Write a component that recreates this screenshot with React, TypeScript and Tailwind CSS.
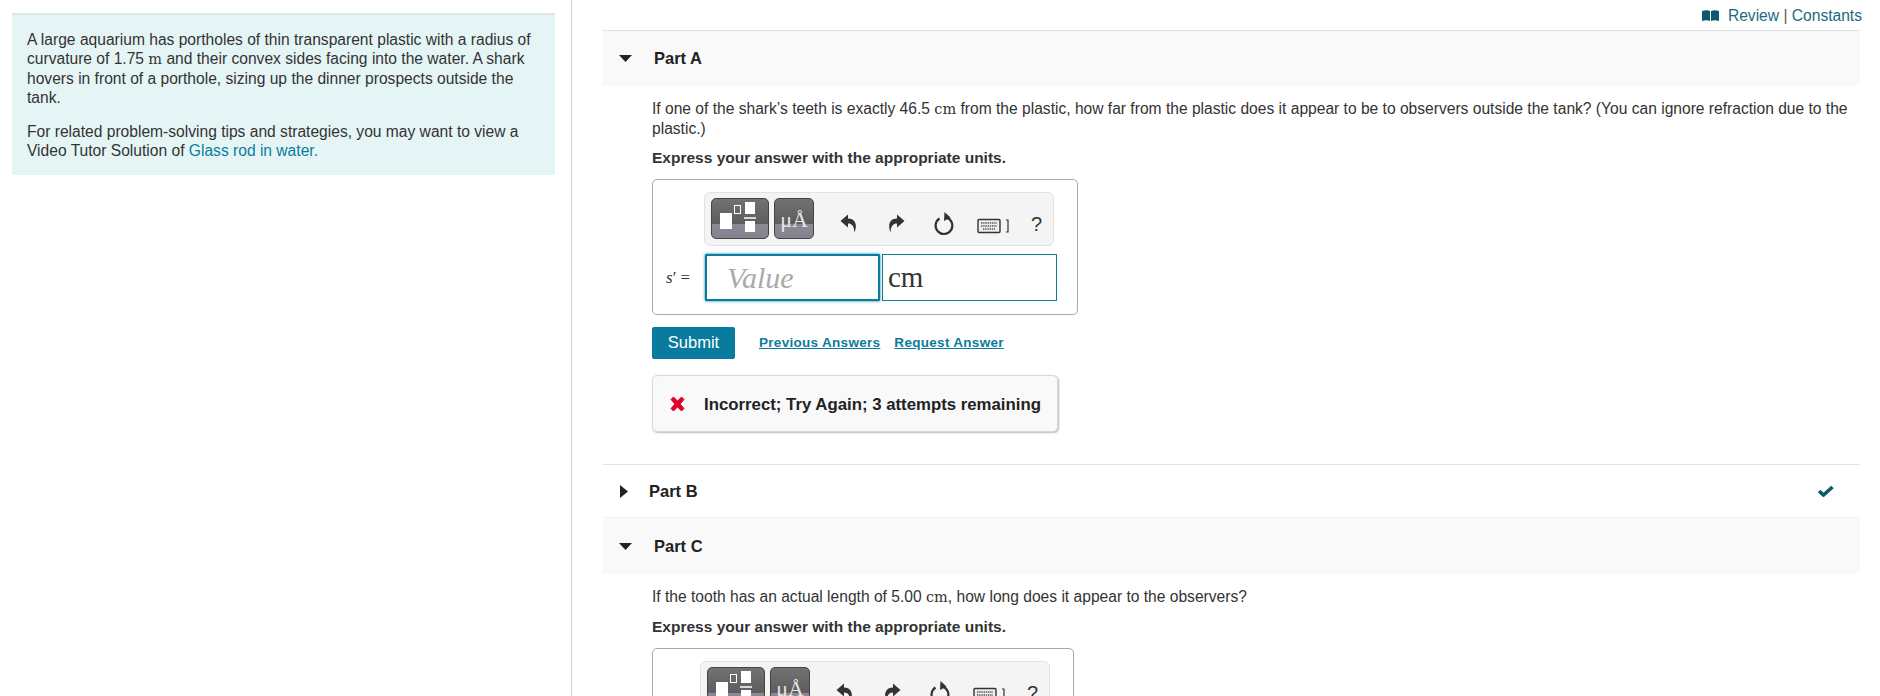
import React from "react";

const sans = "font-['Liberation_Sans',Arial,sans-serif]";
const serif = "font-['Liberation_Serif','Times_New_Roman',serif]";
const dejavu = "font-['DejaVu_Serif',serif]";

function M({ children }: { children: React.ReactNode }) {
  return <span className={`${dejavu} text-[14.5px] text-[#333]`}>{children}</span>;
}

function Toolbar({ ml }: { ml: string }) {
  return (
    <div className={`${ml} flex h-[54px] w-[350px] items-center rounded-[6px] border border-[#e2e2e2] bg-[#f4f4f4] pl-[6px]`}>
      <div className="relative -mt-[2px] h-[41px] w-[58px] shrink-0 overflow-hidden rounded-[5px] border border-[#444] bg-[linear-gradient(#727272,#5c5c5c_65%,#8b8a94_65%,#84838d)]">
        <svg width="56" height="39" viewBox="0 0 56 39">
          <rect x="8" y="14" width="12" height="16" fill="#fff" />
          <rect x="22.5" y="6.5" width="6" height="8" fill="none" stroke="#fff" strokeWidth="1" />
          <rect x="33" y="3" width="10" height="12" fill="#fff" />
          <rect x="32" y="18" width="12" height="2" fill="#d8d8d8" />
          <rect x="33" y="22" width="10" height="11" fill="#fff" />
        </svg>
      </div>
      <div className={`-mt-[2px] ml-[5px] flex h-[41px] w-[40px] shrink-0 items-start justify-center overflow-hidden rounded-[5px] border border-[#444] bg-[linear-gradient(#727272,#5c5c5c_65%,#8b8a94_65%,#84838d)] pt-[9px] ${serif} text-[22px] leading-[24px] text-[#e8e8e8]`}>
        μÅ
      </div>
      <svg className="ml-[26px] mt-[8px] shrink-0" width="17" height="19" viewBox="0 0 17 19">
        <path d="M8 0.5 L0.5 7 L8 13.5 L8 9.5 C12 9.5 14 12 14.5 18.5 C17.5 11 15.5 4.5 8 4.5 Z" fill="#333" />
      </svg>
      <svg className="ml-[31px] mt-[8px] shrink-0" width="17" height="19" viewBox="0 0 17 19">
        <path d="M9 0.5 L16.5 7 L9 13.5 L9 9.5 C5 9.5 3 12 2.5 18.5 C-0.5 11 1.5 4.5 9 4.5 Z" fill="#333" />
      </svg>
      <svg className="ml-[28px] mt-[10px] shrink-0" width="22" height="24" viewBox="0 0 22 24">
        <path d="M13.5 5.6 A8.4 8.4 0 1 1 6.5 6.5" fill="none" stroke="#333" strokeWidth="2.2" />
        <path d="M11.5 0 L17.5 5.5 L11 9 Z" fill="#333" />
      </svg>
      <svg className="ml-[22px] mt-[14px] shrink-0" width="34" height="16" viewBox="0 0 34 16">
        <rect x="1" y="1.5" width="22" height="13" rx="1" fill="#eee" stroke="#333" strokeWidth="1.4" />
        <path d="M4 5 H20 M4 8 H20 M6 11 H18" stroke="#555" strokeWidth="1.4" strokeDasharray="1.4 0.8" />
        <path d="M29 2 H31 V14 H29" fill="none" stroke="#333" strokeWidth="1.2" />
      </svg>
      <span className={`ml-[20px] mt-[10px] ${sans} text-[20px] leading-none text-[#333]`}>?</span>
    </div>
  );
}

function Caret({ down }: { down: boolean }) {
  return down ? (
    <svg className="ml-[1px]" width="13" height="7" viewBox="0 0 13 7"><path d="M0 0 H13 L6.5 7 Z" fill="#222" /></svg>
  ) : (
    <svg width="8" height="13" viewBox="0 0 8 13"><path d="M0 0 L8 6.5 L0 13 Z" fill="#222" /></svg>
  );
}

function PartHeader({ label, height }: { label: string; height: string }) {
  return (
    <div className={`flex ${height} items-center bg-[#f9f9f9] pl-[15px]`}>
      <Caret down />
      <span className="ml-[22px] text-[16.5px] font-bold text-[#222]">{label}</span>
    </div>
  );
}

export default function App() {
  return (
    <div className={`flex h-[696px] w-[1880px] overflow-hidden bg-white ${sans} text-[15.6px] text-[#333]`}>
      <div className="h-full w-[572px] shrink-0 border-r border-[#c5d3e2] pl-[12px] pr-[16px] pt-[13px]">
        <div className="h-[162px] w-[543px] border-t-2 border-[#dde6ea] bg-[#e5f5f6] px-[15px] pt-[15px] leading-[19px] text-[#333]">
          <p>
            A large aquarium has portholes of thin transparent plastic with a radius of curvature of 1.75 <M>m</M> and their convex sides facing into the water. A shark hovers in front of a porthole, sizing up the dinner prospects outside the tank.
          </p>
          <p className="mt-[15px]">
            For related problem-solving tips and strategies, you may want to view a Video Tutor Solution of <span className="text-[#0a7c9e]">Glass rod in water.</span>
          </p>
        </div>
      </div>

      <div className="ml-[31px] h-full w-[1257px] shrink-0">
        <div className="flex h-[31px] items-center justify-end border-b border-[#e2e2e2] pt-[1px] text-[15.6px]">
          <svg width="17" height="11" viewBox="0 0 17 11" className="mr-[9px]">
            <path d="M0 1 C3 0 6 0 8 1 V11 C6 10 3 10 0 11 Z M9 1 C11 0 14 0 17 1 V11 C14 10 11 10 9 11 Z" fill="#0b5a6e" />
          </svg>
          <span className="-mr-[2px] text-[#1b6a80]">Review <span className="text-[#555]">|</span> Constants</span>
        </div>

        <PartHeader label="Part A" height="h-[55px]" />

        <div className="pl-[49px] pr-[4px]">
          <p className="mt-[13px] leading-[19px]">
            If one of the shark’s teeth is exactly 46.5 <M>cm</M> from the plastic, how far from the plastic does it appear to be to observers outside the tank? (You can ignore refraction due to the plastic.)
          </p>
          <p className="mt-[10px] text-[15.5px] font-bold leading-[19px]">Express your answer with the appropriate units.</p>

          <div className="mt-[12px] h-[136px] w-[426px] rounded-[5px] border border-[#aaa] pt-[12px]">
            <Toolbar ml="ml-[51px]" />
            <div className="mt-[8px] flex items-center">
              <span className={`ml-[13px] w-[39px] ${serif} text-[17px] text-[#333]`}>
                <i>s</i>′ =
              </span>
              <div className={`flex h-[47px] w-[175px] items-center rounded-[1px] border-2 border-[#0a7c9e] pl-[20px] shadow-[0_0_3px_#0a7c9e] ${serif} text-[30px] italic text-[#aaa]`}>Value</div>
              <div className={`ml-[2px] flex h-[47px] w-[175px] items-center border border-[#0a7c9e] pl-[5px] ${serif} text-[29px] text-[#333]`}>cm</div>
            </div>
          </div>

          <div className="mt-[12px] flex items-center">
            <div className="flex h-[32px] w-[83px] items-center justify-center rounded-[2px] bg-[#087b9e] pb-[2px] text-[16.5px] text-white">Submit</div>
            <span className="ml-[24px] text-[13.5px] font-bold tracking-[0.3px] text-[#0a7c9e] underline">Previous Answers</span>
            <span className="ml-[14px] text-[13.5px] font-bold tracking-[0.3px] text-[#0a7c9e] underline">Request Answer</span>
          </div>

          <div className="mt-[16px] flex h-[57px] w-[406px] items-center rounded-[5px] border border-[#d8d8d8] bg-[#f9f9f9] pl-[16px] shadow-[1px_1px_2px_#bbb]">
            <svg width="17" height="16" viewBox="0 0 17 16">
              <path d="M2 3.5 L4.5 1 L8.5 5 L12.5 1 L15 3.5 L11 8 L15 12.5 L12.5 15 L8.5 11 L4.5 15 L2 12.5 L6 8 Z" fill="#e0002d" stroke="#e0002d" />
            </svg>
            <span className="ml-[18px] pt-[3px] text-[16.8px] font-bold leading-none text-[#222]">Incorrect; Try Again; 3 attempts remaining</span>
          </div>
        </div>

        <div className="mt-[32px] flex h-[54px] items-center justify-between border-y border-t-[#e2e2e2] border-b-[#f3f3f3] pl-[17px] pr-[26px]">
          <div className="flex items-center">
            <Caret down={false} />
            <span className="ml-[21px] pt-[1px] text-[16.5px] font-bold text-[#222]">Part B</span>
          </div>
          <svg width="16" height="12" viewBox="0 0 16 12">
            <path d="M1 6 L5.5 10 L14.5 2" fill="none" stroke="#0b5a6e" strokeWidth="3.6" />
          </svg>
        </div>

        <PartHeader label="Part C" height="h-[56px]" />

        <div className="pl-[49px]">
          <p className="mt-[13px] leading-[19px]">
            If the tooth has an actual length of 5.00 <M>cm</M>, how long does it appear to the observers?
          </p>
          <p className="mt-[10px] text-[15.5px] font-bold leading-[19px]">Express your answer with the appropriate units.</p>
          <div className="mt-[12px] h-[136px] w-[422px] rounded-[5px] border border-[#aaa] pt-[12px]">
            <Toolbar ml="ml-[47px]" />
          </div>
        </div>
      </div>
    </div>
  );
}
